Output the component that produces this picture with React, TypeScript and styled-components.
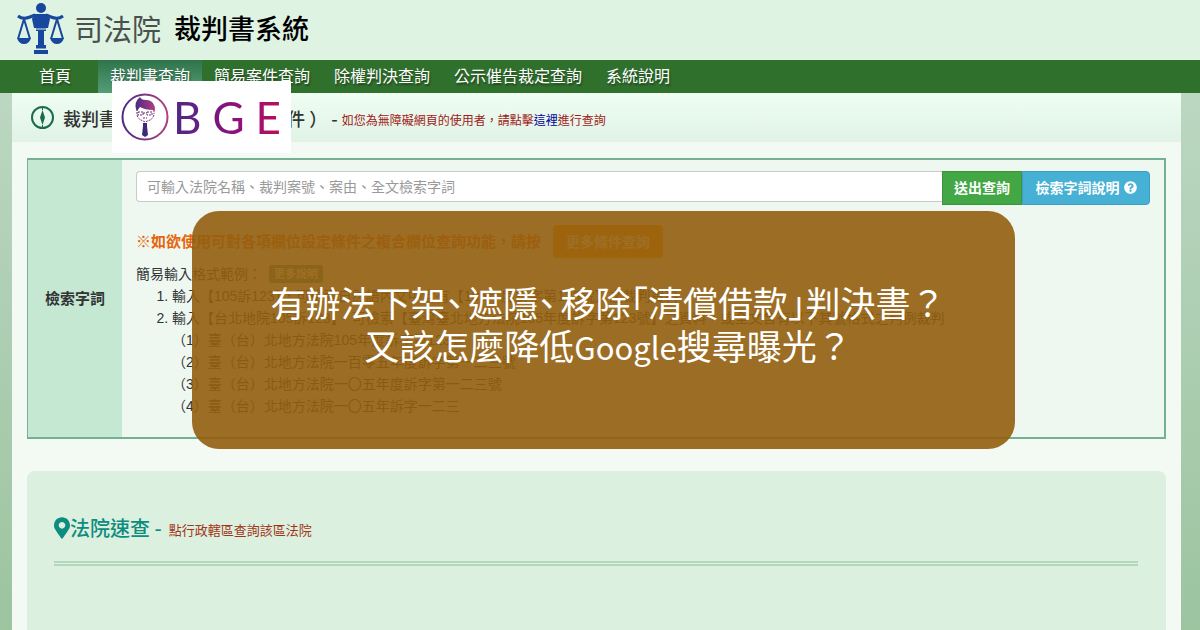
import React from "react";
import styled, { createGlobalStyle } from "styled-components";
import { FaMapMarkerAlt, FaQuestionCircle } from "react-icons/fa";

const GlobalStyle = createGlobalStyle`
  * { box-sizing: border-box; }
  body {
    margin: 0;
    color: #333;
    font-family: "Liberation Sans", "Noto Sans CJK TC", sans-serif;
    font-size: 14px;
    line-height: 22px;
  }
  button, input { font-family: inherit; }
`;

const Page = styled.div`
  position: relative;
  display: flex;
  flex-direction: column;
  min-height: 100vh;
  background: linear-gradient(#c4dcc9, #b7d4bd 25%, #9cc49f);
`;

const Header = styled.header`
  display: flex;
  align-items: center;
  height: 60px;
  padding: 0 0 4px 16px;
  background: #def3e2;
`;

const CourtName = styled.span`
  margin: 0 13px 0 9px;
  color: #4a504c;
  font-family: "Noto Sans CJK TC", sans-serif;
  font-size: 29px;
  font-weight: 400;
`;

const SystemName = styled.h1`
  margin: 0;
  color: #000;
  font-family: "Noto Sans CJK TC", sans-serif;
  font-size: 27px;
  font-weight: 500;
`;

const Nav = styled.nav`
  display: flex;
  height: 33px;
  padding-left: 27px;
  background: #30702d;
`;

const NavLink = styled.a<{ $active?: boolean; $first?: boolean }>`
  padding: 0 12px;
  margin-right: ${(p) => (p.$first ? 15 : 0)}px;
  color: #fff;
  font-size: 16px;
  line-height: 33px;
  text-decoration: none;
  text-shadow: 1px 2px 2px rgba(0, 0, 0, 0.4);
  background: ${(p) => (p.$active ? "linear-gradient(#2f7449, #559c78)" : "none")};
`;

const Main = styled.main`
  flex: 1;
  display: flex;
  flex-direction: column;
  margin: 0 19px 0 12px;
  background: #f3faf3;
`;

const TitleBar = styled.div`
  display: flex;
  align-items: center;
  height: 49px;
  padding-left: 18px;
  background: linear-gradient(#effdf3, #e0f3e5);
`;

const PageTitle = styled.h2`
  margin: 0 0 0 8px;
  color: #333;
  font-family: "Noto Sans CJK TC", sans-serif;
  font-size: 18px;
  font-weight: 500;
  white-space: pre;
`;

const Notice = styled.span`
  padding-top: 7px;
  color: #a02018;
  font-size: 12px;
  a { color: #00009c; text-decoration: none; }
`;

const SearchPanel = styled.section`
  display: flex;
  height: 281px;
  margin: 16px 15px 0;
  border: 2px solid #73b192;
  border-left-width: 1px;
  background: #eef8f1;
`;

const PanelLabel = styled.label`
  display: flex;
  align-items: center;
  justify-content: center;
  width: 94px;
  background: #c5e8d3;
  font-size: 15px;
  font-weight: 700;
`;

const PanelBody = styled.div`
  flex: 1;
  padding: 11px 14px 0;
`;

const SearchRow = styled.form`
  display: flex;
  align-items: flex-start;
`;

const SearchInput = styled.input`
  flex: 1;
  height: 31px;
  padding: 0 10px;
  border: 1px solid #c5cdc8;
  border-right: 0;
  border-radius: 4px 0 0 4px;
  background: #fff;
  font-size: 14px;
  &::placeholder { color: #999; opacity: 1; }
`;

const RowButton = styled.button<{ $info?: boolean }>`
  display: flex;
  align-items: center;
  justify-content: center;
  gap: 4px;
  width: ${(p) => (p.$info ? 128 : 80)}px;
  height: 34px;
  padding: 0 0 2px;
  border: 1px solid ${(p) => (p.$info ? "#3d9fc0" : "#3c953d")};
  border-radius: ${(p) => (p.$info ? "0 4px 4px 0" : "0")};
  background: ${(p) => (p.$info ? "#46b1d4" : "#43a745")};
  color: #fff;
  font-size: 14px;
  font-weight: 700;
  white-space: nowrap;
`;

const AdvancedRow = styled.p`
  display: flex;
  align-items: center;
  gap: 12px;
  margin: 20px 0 5px;
  color: #e8650c;
  font-size: 15px;
  font-weight: 700;
`;

const AdvancedButton = styled.button`
  width: 110px;
  height: 33px;
  padding: 0 0 2px;
  border: 0;
  border-radius: 4px;
  background: #ff9d00;
  color: #fff;
  font-size: 14px;
  font-weight: 700;
`;

const ExampleHead = styled.div`
  display: flex;
  align-items: center;
  gap: 7px;
`;

const MoreButton = styled.button`
  width: 54px;
  height: 18px;
  padding: 0;
  border: 0;
  border-radius: 3px;
  background: #4c9b7b;
  color: #fff;
  font-size: 11px;
  font-weight: 700;
  line-height: 18px;
`;

const ExampleList = styled.ol`
  margin: 0;
  padding-left: 36px;
`;

const SubExample = styled.div`
  white-space: nowrap;
`;

const CourtPanel = styled.section`
  flex: 1;
  min-height: 159px;
  margin: 32px 15px 0;
  padding: 43px 28px 0 27px;
  border-radius: 8px 8px 0 0;
  background: #dbf0df;
`;

const CourtHead = styled.div`
  display: flex;
  align-items: center;
  padding-bottom: 19px;
  border-bottom: 5px double #b5d7bb;
  color: #0f8c80;
`;

const PinIcon = styled(FaMapMarkerAlt)`
  width: 16px;
  height: 24px;
`;

const CourtTitle = styled.h3`
  margin: 0;
  font-family: "Noto Sans CJK TC", sans-serif;
  font-size: 20px;
  font-weight: 500;
  line-height: 26px;
`;

const CourtHint = styled.span`
  padding: 6px 0 0 7px;
  color: #a33415;
  font-size: 13px;
`;

const Watermark = styled.div`
  position: absolute;
  top: 81px;
  left: 112px;
  display: flex;
  align-items: center;
  width: 179px;
  height: 72px;
  padding-left: 8px;
  background: #fff;
`;

const BrandLetters = styled.div`
  display: flex;
  flex: 1;
  justify-content: space-between;
  padding: 0 10px 0 3px;
  font-family: Lato, sans-serif;
  font-size: 44px;
  font-weight: 400;
  line-height: 50px;
`;

const BrandLetter = styled.span<{ $from: string; $to: string }>`
  background: linear-gradient(90deg, ${(p) => p.$from}, ${(p) => p.$to});
  background-clip: text;
  color: transparent;
`;

const Banner = styled.div`
  position: absolute;
  top: 211px;
  left: 16%;
  right: 185px;
  height: 238px;
  padding: 69px 0 0 9px;
  border-radius: 27px;
  background: rgba(146, 94, 14, 0.9);
  color: #fff;
  font-family: "Noto Sans CJK TC", sans-serif;
  font-size: 35px;
  line-height: 43px;
  text-align: center;
  white-space: nowrap;
`;

const Narrow = styled.span<{ $comma?: boolean }>`
  padding-right: ${(p) => (p.$comma ? 5 : 0)}px;
  font-feature-settings: "halt";
`;

const Latin = styled.span`
  font-size: 31px;
`;

const navItems = ["首頁", "裁判書查詢", "簡易案件查詢", "除權判決查詢", "公示催告裁定查詢", "系統說明"];

const subExamples = [
  "（1）臺（台）北地方法院105年度訴字第123號",
  "（2）臺（台）北地方法院一百零五年度訴字第一二三號",
  "（3）臺（台）北地方法院一〇五年度訴字第一二三號",
  "（4）臺（台）北地方法院一〇五年訴字一二三",
];

const ScalesLogo = () => (
  <svg width="49" height="53" viewBox="0 0 49 53" aria-hidden="true">
    <g fill="#17479e">
      <circle cx="25" cy="6" r="5" />
      <path d="M18 12h14l2 5-2 9H18l-2-9z" />
      <path d="M22 25h6v19h-6zM20 26h10v3H20zM20 43h10v4H20zM18 48h14v4H18z" />
      <path d="M1 36h14q-2 6-7 6t-7-6zM34 36h14q-2 6-7 6t-7-6z" />
    </g>
    <path d="M2 14q5 4 12 1l5-2M47 14q-5 4-12 1l-5-2" fill="none" stroke="#17479e" strokeWidth="3" />
    <path d="M8 17 2 37M8 17l6 20M41 17l-6 20M41 17l6 20" fill="none" stroke="#17479e" strokeWidth="2" />
    <path d="M20 27h10M20 47h10" stroke="#def3e2" strokeWidth="1" />
  </svg>
);

const CompassIcon = () => (
  <svg width="25" height="25" viewBox="0 0 25 25" aria-hidden="true">
    <circle cx="12.500" cy="12.500" r="10.500" fill="none" stroke="#1c6a4d" strokeWidth="2" />
    <path d="M12.500 5 15 12.500 12.500 20 10 12.500z" fill="#1c6a4d" />
    <path d="M12.500 2v3M12.500 20v3" stroke="#1c6a4d" />
  </svg>
);

const BrandMark = () => (
  <svg width="50" height="50" viewBox="0 0 50 50" aria-hidden="true">
    <defs>
      <linearGradient id="brand" x1="0" x2="1">
        <stop offset="0" stopColor="#4b2a86" />
        <stop offset="1" stopColor="#b0407c" />
      </linearGradient>
    </defs>
    <circle cx="25" cy="25" r="22.500" fill="none" stroke="url(#brand)" strokeWidth="2" />
    <path d="M16 17q-2-7 4-12 1 3 6 3 6 0 8 5 2 3 0 8l-1-3q-8 0-13-3l-3 4z" fill="url(#brand)" />
    <path d="M17 17v5q0 4 4 6l4 2 5-2q4-2 4-7" fill="none" stroke="#6b2c7c" strokeWidth="1" strokeDasharray="2 1" />
    <path d="M18 20h5v3h-5zM27 20h5v3h-5zM23 21h4M23 26h4" fill="none" stroke="#6b2c7c" strokeWidth="1" strokeDasharray="2 1" />
    <path d="M23 31h4v3l1 9-3 2-3-2 1-9z" fill="#3c2a78" />
  </svg>
);

export default function App() {
  return (
    <Page>
      <GlobalStyle />
      <Header>
        <ScalesLogo />
        <CourtName>司法院</CourtName>
        <SystemName>裁判書系統</SystemName>
      </Header>
      <Nav>
        {navItems.map((item, i) => (
          <NavLink href="#" key={item} $first={i === 0} $active={i === 1}>
            {item}
          </NavLink>
        ))}
      </Nav>
      <Main>
        <TitleBar>
          <CompassIcon />
          <PageTitle>{"裁判書查詢 （ 未含簡易庭案件 ） - "}</PageTitle>
          <Notice>
            如您為無障礙網頁的使用者，請點擊<a href="#">這裡</a>進行查詢
          </Notice>
        </TitleBar>
        <SearchPanel>
          <PanelLabel htmlFor="keyword">檢索字詞</PanelLabel>
          <PanelBody>
            <SearchRow>
              <SearchInput id="keyword" placeholder="可輸入法院名稱、裁判案號、案由、全文檢索字詞" />
              <RowButton type="button">送出查詢</RowButton>
              <RowButton type="button" $info>
                檢索字詞說明
                <FaQuestionCircle size={13} />
              </RowButton>
            </SearchRow>
            <AdvancedRow>
              ※如欲使用可對各項欄位設定條件之複合欄位查詢功能，請按
              <AdvancedButton type="button">更多條件查詢</AdvancedButton>
            </AdvancedRow>
            <ExampleHead>
              簡易輸入格式範例：
              <MoreButton type="button">更多說明</MoreButton>
            </ExampleHead>
            <ExampleList>
              <li>輸入【105訴123】，可檢索自然語內文中含有【105年度訴字第123號】之裁判資料</li>
              <li>
                輸入【台北地院105訴123】，可檢索【臺灣臺北地方法院105年度訴字第123號】之資料，或全文含有以下其號格式之判例裁判
                {subExamples.map((text) => (
                  <SubExample key={text}>{text}</SubExample>
                ))}
              </li>
            </ExampleList>
          </PanelBody>
        </SearchPanel>
        <CourtPanel>
          <CourtHead>
            <PinIcon />
            <CourtTitle>法院速查 -</CourtTitle>
            <CourtHint>點行政轄區查詢該區法院</CourtHint>
          </CourtHead>
        </CourtPanel>
      </Main>
      <Watermark>
        <BrandMark />
        <BrandLetters>
          <BrandLetter $from="#4b2a86" $to="#6b1d84">B</BrandLetter>
          <BrandLetter $from="#74177f" $to="#96107a">G</BrandLetter>
          <BrandLetter $from="#a01070" $to="#b8105c">E</BrandLetter>
        </BrandLetters>
      </Watermark>
      <Banner>
        有辦法下架<Narrow $comma>、</Narrow>遮隱<Narrow $comma>、</Narrow>移除<Narrow>「</Narrow>清償借款<Narrow>」</Narrow>判決書？
        <br />
        又該怎麼降低<Latin>Google</Latin>搜尋曝光？
      </Banner>
    </Page>
  );
}
